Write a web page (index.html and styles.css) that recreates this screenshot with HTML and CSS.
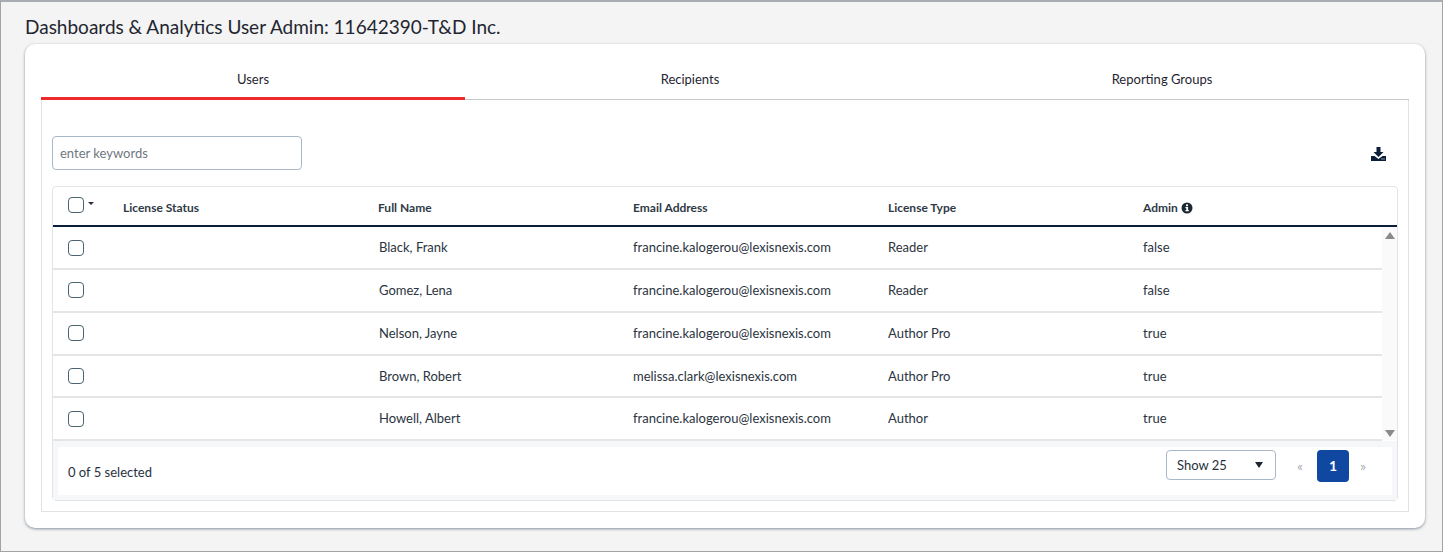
FILE: index.html
```html
<!DOCTYPE html>
<html lang="en">
<head>
    <meta charset="UTF-8">
    <title>User Admin</title>
    <link rel="stylesheet" href="styles.css">
</head>
<body>
    <div class="page">
        <h1 class="page-title">Dashboards &amp; Analytics User Admin: 11642390-T&amp;D Inc.</h1>
        <div class="card">
            <div class="tabs">
                <div class="tab active">Users</div>
                <div class="tab">Recipients</div>
                <div class="tab">Reporting Groups</div>
            </div>
            <div class="panel">
                <div class="toolbar">
                    <input class="search" type="text" placeholder="enter keywords">
                    <svg class="download" width="15" height="14" viewBox="0 0 15 14">
                        <path fill="#0b1f38" d="M5.500 0h4v5h3l-5 5-5-5h3z"/>
                        <path fill="#0b1f38" d="M0 9h3.500l4 3 4-3H15v5H0z"/>
                        <rect x="10.500" y="11.500" width="1" height="1" fill="#fff"/>
                        <rect x="12.500" y="11.500" width="1" height="1" fill="#fff"/>
                    </svg>
                </div>
                <div class="grid-box">
                    <div class="row head">
                        <div class="check-cell">
                            <span class="check"></span>
                            <span class="caret"></span>
                        </div>
                        <div>License Status</div>
                        <div>Full Name</div>
                        <div>Email Address</div>
                        <div>License Type</div>
                        <div class="admin-head">Admin
                            <svg width="12" height="12" viewBox="0 0 12 12">
                                <circle cx="6" cy="6" r="5.500" fill="#1d2733"/>
                                <rect x="5" y="2.400" width="2" height="1.800" fill="#fff"/>
                                <path fill="#fff" d="M4.400 5h2.700v3h.7v1.200H4.400V8h.9V6.200h-.9z"/>
                            </svg>
                        </div>
                    </div>
                    <div class="body">
                        <div class="rows">
                            <div class="row item">
                                <div class="check-cell"><span class="check"></span></div>
                                <div></div>
                                <div class="name">Black, Frank</div>
                                <div>francine.kalogerou@lexisnexis.com</div>
                                <div>Reader</div>
                                <div>false</div>
                            </div>
                            <div class="row item">
                                <div class="check-cell"><span class="check"></span></div>
                                <div></div>
                                <div class="name">Gomez, Lena</div>
                                <div>francine.kalogerou@lexisnexis.com</div>
                                <div>Reader</div>
                                <div>false</div>
                            </div>
                            <div class="row item">
                                <div class="check-cell"><span class="check"></span></div>
                                <div></div>
                                <div class="name">Nelson, Jayne</div>
                                <div>francine.kalogerou@lexisnexis.com</div>
                                <div>Author Pro</div>
                                <div>true</div>
                            </div>
                            <div class="row item">
                                <div class="check-cell"><span class="check"></span></div>
                                <div></div>
                                <div class="name">Brown, Robert</div>
                                <div>melissa.clark@lexisnexis.com</div>
                                <div>Author Pro</div>
                                <div>true</div>
                            </div>
                            <div class="row item">
                                <div class="check-cell"><span class="check"></span></div>
                                <div></div>
                                <div class="name">Howell, Albert</div>
                                <div>francine.kalogerou@lexisnexis.com</div>
                                <div>Author</div>
                                <div>true</div>
                            </div>
                        </div>
                        <div class="scrollbar">
                            <span class="arrow up"></span>
                            <span class="arrow down"></span>
                        </div>
                    </div>
                    <div class="footer">
                        <div class="footer-inner">
                            <div class="selected">0 of 5 selected</div>
                            <div class="pager">
                                <div class="show">Show 25<span class="show-caret"></span></div>
                                <span class="page-arrow prev">«</span>
                                <span class="page-num">1</span>
                                <span class="page-arrow next">»</span>
                            </div>
                        </div>
                    </div>
                </div>
            </div>
        </div>
    </div>
</body>
</html>
```

FILE: styles.css
```css
* {
    box-sizing: border-box;
}
html, body {
    margin: 0;
    height: 100%;
}
body {
    font-family: Lato, "Open Sans", sans-serif;
    color: #1d2733;
    overflow: hidden;
}
.page {
    height: 552px;
    background-color: #f4f4f4;
    border: 1px solid #a3a3a3;
    border-top: 2px solid #a9adb1;
    padding: 0 17px 0 24px;
}
.page-title {
    margin: 0;
    height: 42px;
    padding-top: 13px;
    font-size: 19px;
    line-height: 23px;
    font-weight: 400;
    color: #1f2630;
}
.card {
    height: 484px;
    background-color: #fff;
    border-radius: 10px;
    box-shadow: 0 1px 3px rgba(70, 90, 110, 0.65);
    padding: 0 16px;
}
.tabs {
    display: grid;
    grid-template-columns: 424px 450px 1fr;
    height: 56px;
    border-bottom: 1px solid #c4c9ce;
}
.tab {
    height: 56px;
    padding-top: 27px;
    text-align: center;
    font-size: 13px;
    line-height: 17px;
    color: #1f2630;
}
.tab.active {
    border-bottom: 3px solid #ee2b2b;
}
.panel {
    height: 412px;
    border: 1px solid #dfe3e6;
    border-top: none;
    padding: 36px 10px 0;
}
.toolbar {
    display: flex;
    justify-content: space-between;
    align-items: center;
    height: 34px;
    padding-right: 12px;
}
.download {
    margin-top: 2px;
}
.search {
    width: 250px;
    height: 34px;
    border: 1px solid #a9b8c8;
    border-radius: 4px;
    padding: 0 7px;
    font-family: inherit;
    font-size: 13px;
    outline: none;
}
.search::placeholder {
    color: #6f7780;
    opacity: 1;
}
.grid-box {
    margin-top: 16px;
    height: 315px;
    border: 1px solid #e2e4ea;
    border-radius: 4px;
}
.row {
    display: grid;
    grid-template-columns: 55px 255px 255px 255px 255px 1fr;
    align-items: center;
    font-size: 13px;
}
.head {
    height: 40px;
    padding: 3px 0 0 15px;
    border-bottom: 2px solid #0b1f38;
    font-size: 12px;
    font-weight: 700;
    color: #2f3a46;
}
.head > .check-cell {
    position: relative;
    top: -3px;
}
.item {
    height: 42.85px;
    padding-left: 15px;
    border-bottom: 2px solid #e4e5e6;
    color: #2b3440;
}
.item > div:not(.check-cell) {
    padding-bottom: 0.8px;
}
.item > .check-cell {
    padding-top: 0.25px;
}
.item .name {
    padding-left: 1px;
}
.check-cell {
    display: flex;
    align-items: center;
    gap: 4px;
}
.check {
    display: block;
    width: 16px;
    height: 16px;
    border: 1px solid #4a6272;
    border-radius: 4px;
    background-color: #fff;
}
.caret {
    width: 0;
    height: 0;
    border-left: 3px solid transparent;
    border-right: 3px solid transparent;
    border-top: 3px solid #27313d;
    margin-top: -2px;
}
.admin-head {
    display: flex;
    align-items: center;
    gap: 3px;
}
.body {
    display: flex;
    height: 214px;
}
.rows {
    flex: 1;
}
.scrollbar {
    width: 15px;
    height: 213px;
    background-color: #fafafa;
    display: flex;
    flex-direction: column;
    justify-content: space-between;
    align-items: center;
    padding: 5px 0 3px;
}
.arrow {
    width: 0;
    height: 0;
    border-left: 5px solid transparent;
    border-right: 5px solid transparent;
}
.arrow.up {
    border-bottom: 7px solid #8a8a8a;
}
.arrow.down {
    border-top: 7px solid #8a8a8a;
}
.footer {
    height: 59px;
    background-color: #f6f7f9;
    padding: 6px 5px 5px;
}
.footer-inner {
    display: flex;
    justify-content: space-between;
    align-items: center;
    height: 48px;
    background-color: #fff;
    padding: 0 15px 0 10px;
}
.selected {
    font-size: 13px;
    color: #27313d;
    padding-top: 2px;
}
.pager {
    display: flex;
    align-items: flex-start;
    margin-top: -10px;
}
.show {
    display: flex;
    justify-content: space-between;
    align-items: center;
    width: 110px;
    height: 30px;
    border: 1px solid #a9b8c8;
    border-radius: 4px;
    padding: 0 12px 0 10px;
    font-size: 13px;
    color: #27313d;
}
.show-caret {
    width: 0;
    height: 0;
    border-left: 4px solid transparent;
    border-right: 4px solid transparent;
    border-top: 6px solid #1d2733;
}
.page-arrow {
    text-align: center;
    font-size: 14px;
    line-height: 32px;
    color: #a8b0b8;
}
.page-arrow.prev {
    width: 34px;
    margin-left: 7px;
}
.page-arrow.next {
    width: 28px;
}
.page-num {
    width: 32px;
    height: 32px;
    border-radius: 4px;
    background-color: #0f47a1;
    color: #fff;
    font-size: 14px;
    font-weight: 700;
    line-height: 32px;
    text-align: center;
}
```
